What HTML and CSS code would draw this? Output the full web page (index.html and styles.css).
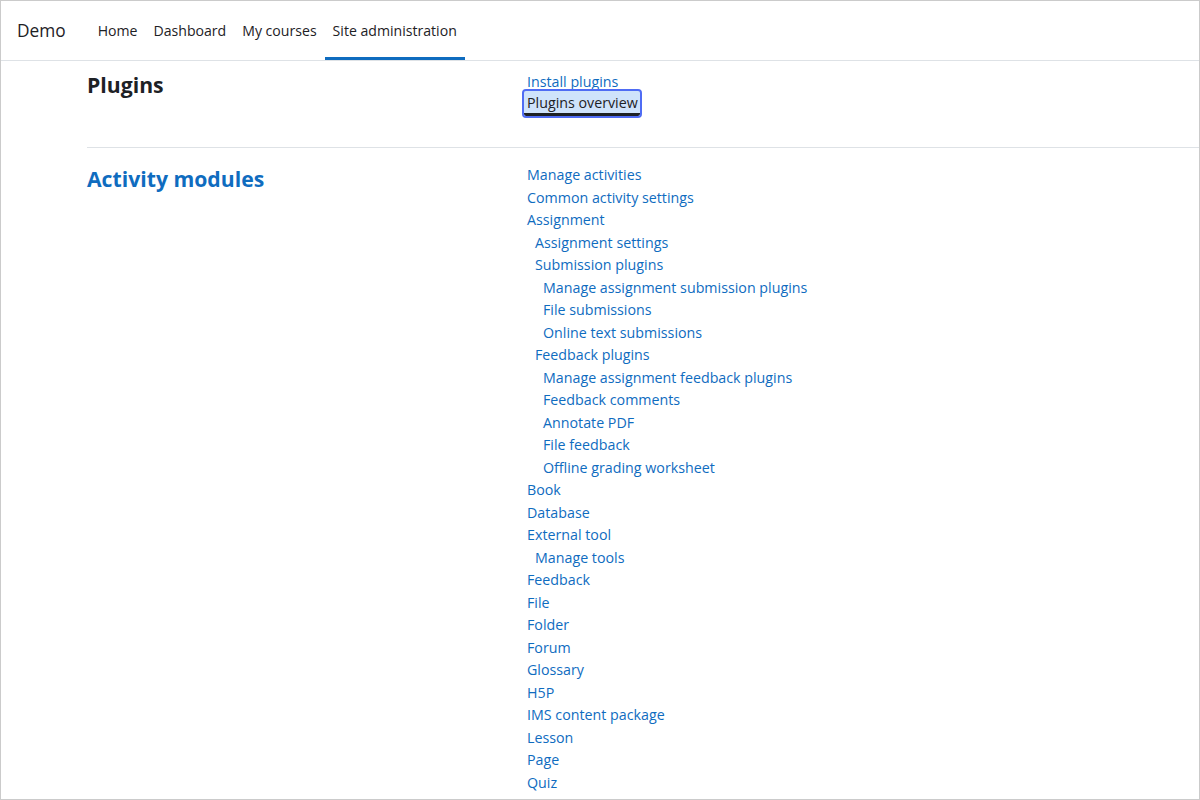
FILE: index.html
```html
<!DOCTYPE html>
<html lang="en">
<head>
<meta charset="utf-8">
<title>Plugins - Site administration</title>
<link rel="stylesheet" href="styles.css">
</head>
<body>
<div class="frame">
  <header class="navbar">
    <span class="brand">Demo</span>
    <nav class="nav">
      <a href="#">Home</a>
      <a href="#">Dashboard</a>
      <a href="#">My courses</a>
      <a href="#" class="active">Site administration</a>
    </nav>
  </header>
  <main class="content">
    <section class="cat first">
      <h3 class="cat-title">Plugins</h3>
      <ul class="links">
        <li><a href="#">Install plugins</a></li>
        <li class="has-focus"><a href="#" class="focus">Plugins overview</a></li>
      </ul>
    </section>
    <section class="cat">
      <h3 class="cat-title"><a href="#">Activity modules</a></h3>
      <ul class="links">
        <li><a href="#">Manage activities</a></li>
        <li><a href="#">Common activity settings</a></li>
        <li><a href="#">Assignment</a></li>
        <li class="l1"><a href="#">Assignment settings</a></li>
        <li class="l1"><a href="#">Submission plugins</a></li>
        <li class="l2"><a href="#">Manage assignment submission plugins</a></li>
        <li class="l2"><a href="#">File submissions</a></li>
        <li class="l2"><a href="#">Online text submissions</a></li>
        <li class="l1"><a href="#">Feedback plugins</a></li>
        <li class="l2"><a href="#">Manage assignment feedback plugins</a></li>
        <li class="l2"><a href="#">Feedback comments</a></li>
        <li class="l2"><a href="#">Annotate PDF</a></li>
        <li class="l2"><a href="#">File feedback</a></li>
        <li class="l2"><a href="#">Offline grading worksheet</a></li>
        <li><a href="#">Book</a></li>
        <li><a href="#">Database</a></li>
        <li><a href="#">External tool</a></li>
        <li class="l1"><a href="#">Manage tools</a></li>
        <li><a href="#">Feedback</a></li>
        <li><a href="#">File</a></li>
        <li><a href="#">Folder</a></li>
        <li><a href="#">Forum</a></li>
        <li><a href="#">Glossary</a></li>
        <li><a href="#">H5P</a></li>
        <li><a href="#">IMS content package</a></li>
        <li><a href="#">Lesson</a></li>
        <li><a href="#">Page</a></li>
        <li><a href="#">Quiz</a></li>
      </ul>
    </section>
  </main>
</div>
</body>
</html>
```

FILE: styles.css
```css
html, body {
  margin: 0;
  padding: 0;
  background: #ffffff;
}

.frame {
  box-sizing: border-box;
  height: 800px;
  border: 1px solid #cbcbcb;
  overflow: hidden;
  font-family: "Open Sans", "Noto Sans", "Liberation Sans", sans-serif;
  color: #1d2125;
}

.navbar {
  display: flex;
  height: 59px;
  border-bottom: 1px solid #dee2e6;
  padding-left: 16px;
}

.brand {
  display: flex;
  align-items: center;
  font-size: 17.3px;
  color: #1d2125;
  margin-right: 24px;
}

.nav {
  display: flex;
}

.nav a {
  display: flex;
  align-items: center;
  padding: 3px 8px 0;
  border-bottom: 3px solid transparent;
  font-size: 14.1px;
  color: #1d2125;
  text-decoration: none;
}

.nav a.active {
  border-bottom-color: #0f6cbf;
}

.content {
  padding-left: 86px;
}

.cat {
  display: grid;
  grid-template-columns: 440px 1fr;
  align-items: start;
  padding: 16px 0 31px;
  border-bottom: 1px solid #dee2e6;
}

.cat.first {
  padding-top: 10px;
}

.cat-title {
  margin: 1.5px 0 0;
  font-size: 21.2px;
  line-height: 24px;
  font-weight: 700;
  color: #1d2125;
}

.cat-title a {
  color: #0f6cbf;
  text-decoration: none;
}

.cat + .cat .cat-title {
  margin-top: 3px;
}

.links {
  list-style: none;
  margin: 0;
  padding: 0;
  font-size: 14.25px;
  line-height: 22.5px;
}

.links a {
  color: #0f6cbf;
  text-decoration: none;
}

.links .l1 {
  padding-left: 8px;
}

.links .l2 {
  padding-left: 16px;
}

.links .has-focus {
  display: flex;
  align-items: flex-start;
  height: 22.5px;
}

.links a.focus {
  display: block;
  margin: -2.5px 0 0 -3px;
  padding: 1.5px 2px 0 3px;
  line-height: 20px;
  background: #cfe3fb;
  border-bottom: 3px solid #1d2125;
  color: #1d2125;
  outline: 2.5px solid #4f6cf4;
  border-radius: 2px;
}
```
